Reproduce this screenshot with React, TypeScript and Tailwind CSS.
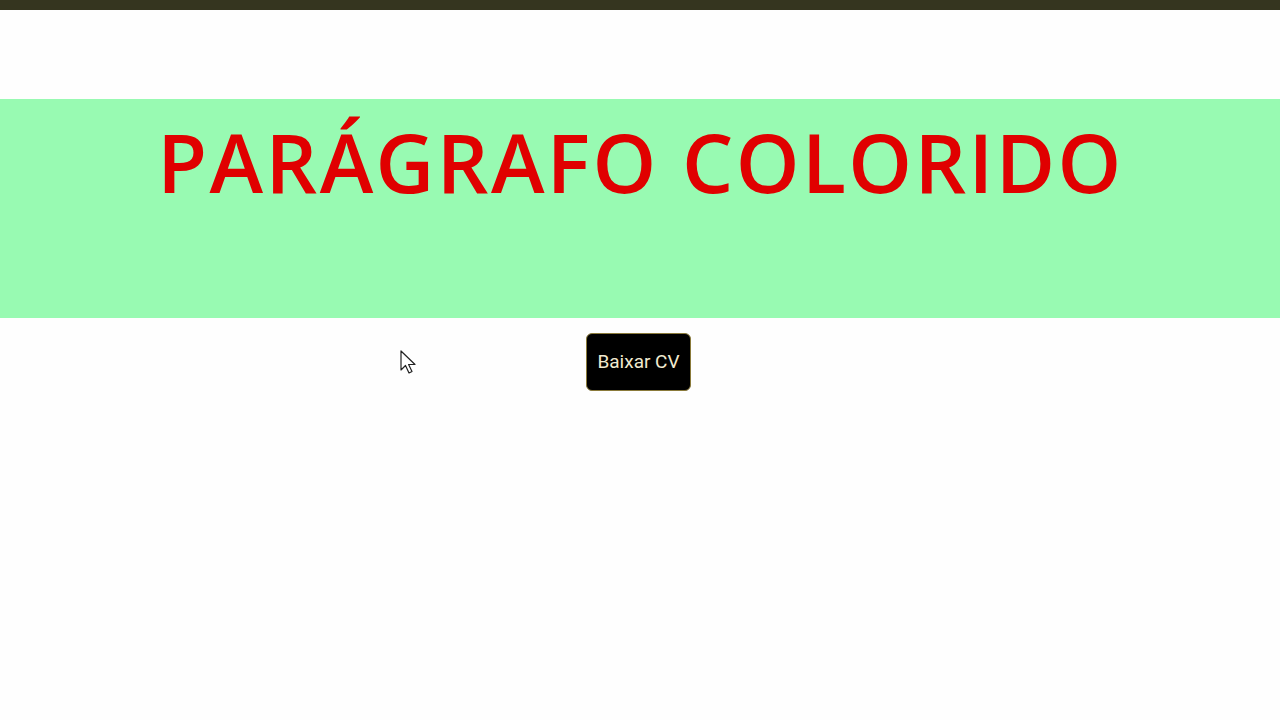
export default function App() {
  return (
    <div className="relative min-h-[720px] w-full bg-[#fefefe]" style={{ fontFamily: '"Open Sans", "Noto Sans", sans-serif' }}>
      {/* browser top strip */}
      <div className="h-[10px] w-full bg-[#35351f]" />

      <main className="pt-[89px]">
        {/* coloured paragraph */}
        <section className="h-[219px] w-full bg-[#98fab2]">
          <p className="pt-[22px] pl-[1px] text-center text-[81px] leading-none font-semibold tracking-[2.4px] text-[#e00000]">
            PARÁGRAFO COLORIDO
          </p>
        </section>

        <div className="flex justify-center pt-[15px] pr-[3px]">
          <button
            className="h-[58px] w-[105px] rounded-[6px] border border-[#8a7a3a] bg-black text-[19px] font-normal text-[#f1ead0]"
            style={{ fontFamily: 'Roboto, "Liberation Sans", sans-serif' }}
          >
            Baixar CV
          </button>
        </div>
      </main>

      {/* mouse pointer */}
      <svg className="absolute left-[400px] top-[350px]" width="20" height="28" viewBox="0 0 20 28">
        <path d="M1 1 L1 20 L5.5 15.5 L9 23 L12 21.5 L8.6 14.5 L15 14.5 Z" fill="#fff" stroke="#222" strokeWidth="1.2" strokeLinejoin="round" />
      </svg>
    </div>
  );
}
